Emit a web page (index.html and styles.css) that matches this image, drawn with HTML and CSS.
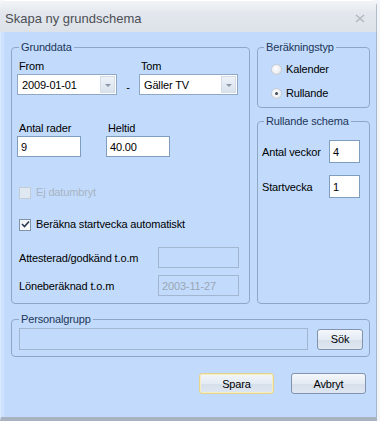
FILE: index.html
```html
<!DOCTYPE html>
<html lang="sv">
  <head>
    <meta charset="UTF-8" />
    <title>Skapa ny grundschema</title>
    <link rel="stylesheet" href="styles.css">
  </head>
  <body>
    <div class="window">
      <div class="titlebar">
        <span class="title">Skapa ny grundschema</span>
        <svg class="close" width="10" height="9" viewBox="0 0 10 9">
          <path d="M1 1 L9 8 M9 1 L1 8" stroke="#b4b9c0" stroke-width="1.6" fill="none" />
        </svg>
      </div>
      <div class="client">
        <div class="top">
          <fieldset class="group grunddata">
            <legend>Grunddata</legend>
            <div class="row dates">
              <div class="field">
                <label>From</label>
                <div class="combo from">
                  <span class="value">2009-01-01</span>
                  <span class="arrow"></span>
                </div>
              </div>
              <span class="dash">-</span>
              <div class="field">
                <label>Tom</label>
                <div class="combo tom">
                  <span class="value">Gäller TV</span>
                  <span class="arrow"></span>
                </div>
              </div>
            </div>
            <div class="row nums">
              <div class="field">
                <label>Antal rader</label>
                <div class="textbox num">9</div>
              </div>
              <div class="field">
                <label>Heltid</label>
                <div class="textbox num">40.00</div>
              </div>
            </div>
            <div class="check disabled">
              <span class="box"></span>Ej datumbryt
            </div>
            <div class="check second">
              <span class="box">
                <svg width="9" height="9" viewBox="0 0 9 9">
                  <path d="M1 4 L3.5 6.5 L8 1.5" stroke="#2a3a50" stroke-width="1.6" fill="none" />
                </svg>
              </span>Beräkna startvecka automatiskt
            </div>
            <div class="pair first">
              <span class="pair-label">Attesterad/godkänd t.o.m</span>
              <div class="textbox readonly"></div>
            </div>
            <div class="pair">
              <span class="pair-label">Löneberäknad t.o.m</span>
              <div class="textbox readonly">2003-11-27</div>
            </div>
          </fieldset>
          <div class="side">
            <fieldset class="group typ">
              <legend>Beräkningstyp</legend>
              <div class="radio">
                <span class="circle"></span>Kalender
              </div>
              <div class="radio second">
                <span class="circle on"></span>Rullande
              </div>
            </fieldset>
            <fieldset class="group schema">
              <legend>Rullande schema</legend>
              <div class="line">
                <span class="line-label">Antal veckor</span>
                <div class="textbox small">4</div>
              </div>
              <div class="line second">
                <span class="line-label">Startvecka</span>
                <div class="textbox small">1</div>
              </div>
            </fieldset>
          </div>
        </div>
        <fieldset class="group personal">
          <legend>Personalgrupp</legend>
          <div class="search">
            <div class="textbox readonly wide"></div>
            <button class="btn sok">Sök</button>
          </div>
        </fieldset>
        <div class="actions">
          <button class="btn default">Spara</button>
          <button class="btn">Avbryt</button>
        </div>
      </div>
    </div>
  </body>
</html>
```

FILE: styles.css
```css
html, body {
  margin: 0;
  padding: 0;
  background: #f4f6f9;
}
body {
  width: 380px;
  height: 421px;
  overflow: hidden;
  font-family: "Liberation Sans", Arial, sans-serif;
  font-size: 11px;
  letter-spacing: -0.15px;
  color: #000;
}
.window {
  width: 377px;
  height: 421px;
  display: flex;
  flex-direction: column;
  border-radius: 6px 6px 0 0;
  overflow: hidden;
}
.titlebar {
  height: 32px;
  flex: none;
  display: flex;
  align-items: center;
  justify-content: space-between;
  padding: 3px 10px 0 5px;
  box-sizing: border-box;
  background: linear-gradient(to bottom, #f2f4f7, #e3e7ed 40%, #dde2e9);
  border-top: 1px solid #fff;
  border-right: 1px solid #b3bdca;
}
.title {
  font-size: 13px;
  color: #4c4f55;
  letter-spacing: 0;
}
.close {
  margin-right: 1px;
}
.client {
  flex: 1;
  background: #c2dbfc;
  padding: 9px 0 0 10px;
  border-left: 1px solid #d8e8fd;
  border-right: 1px solid #a6b7cc;
  border-bottom: 4px solid #a9b3bf;
  box-shadow: inset 3px 0 0 #cfe2fd;
  box-sizing: border-box;
}
.top {
  display: flex;
  height: 263px;
}
.group {
  margin: 0;
  border: 1px solid #8fa7c7;
  border-radius: 4px;
  box-sizing: border-box;
  min-width: 0;
}
.group legend {
  line-height: 13px;
  padding: 0 2px;
  color: #1c3558;
}
.grunddata {
  width: 239px;
  padding: 6px 0 6px 5px;
}
.grunddata legend {
  margin-left: 2px;
}
.row {
  display: flex;
}
.field label {
  display: block;
  line-height: 13px;
  margin: 0 0 1px 2px;
}
.combo {
  display: flex;
  height: 21px;
  background: #fff;
  border: 1px solid #8ea8c6;
  box-sizing: border-box;
  align-items: center;
  padding: 1px;
}
.combo.from {
  width: 100px;
}
.combo.tom {
  width: 99px;
}
.combo .value {
  flex: 1;
  padding-left: 3px;
}
.combo .arrow {
  width: 15px;
  height: 17px;
  background: linear-gradient(to bottom, #eef2f7, #d9e2ed);
  border: 1px solid #d4dce7;
  box-sizing: border-box;
  position: relative;
}
.combo .arrow::after {
  content: "";
  position: absolute;
  left: 4px;
  top: 7px;
  border-left: 3px solid transparent;
  border-right: 3px solid transparent;
  border-top: 3px solid #8c98a8;
}
.dash {
  width: 22px;
  text-align: center;
  padding-top: 21px;
  line-height: 13px;
}
.nums {
  margin-top: 27px;
  gap: 25px;
}
.textbox {
  height: 21px;
  box-sizing: border-box;
  background: #fff;
  border: 1px solid #7f9dbf;
  padding: 3px 0 0 3px;
  line-height: 14px;
}
.textbox.num {
  width: 64px;
}
.check {
  display: flex;
  align-items: center;
  line-height: 13px;
  margin: 29px 0 0 2px;
}
.check.second {
  margin-top: 19px;
}
.check .box {
  width: 12px;
  height: 12px;
  box-sizing: border-box;
  border: 1px solid #8193a9;
  background: linear-gradient(135deg, #eef0f3, #fff);
  margin-right: 5px;
  display: flex;
  align-items: center;
  justify-content: center;
}
.check.disabled {
  color: #a8b4c2;
}
.check.disabled .box {
  border-color: #c3cbd5;
  background: #dfe7f1;
}
.pair {
  display: flex;
  align-items: center;
  margin-top: 7px;
}
.pair.first {
  margin-top: 16px;
}
.pair-label {
  width: 139px;
  padding-left: 2px;
}
.textbox.readonly {
  width: 81px;
  background: transparent;
  border-color: #a3b6d0;
  color: #9aa6b4;
}
.side {
  width: 113px;
  margin-left: 7px;
  display: flex;
  flex-direction: column;
}
.typ {
  padding: 9px 0 7px 13px;
}
.typ legend {
  margin-left: -7px;
}
.radio {
  display: flex;
  align-items: center;
  line-height: 13px;
}
.radio.second {
  margin-top: 11px;
}
.radio .circle {
  width: 11px;
  height: 11px;
  border-radius: 50%;
  box-sizing: border-box;
  border: 1px solid #c6ccd4;
  background: radial-gradient(circle at 40% 40%, #ffffff, #dde1e6);
  margin-right: 4px;
  position: relative;
}
.radio .circle.on::after {
  content: "";
  position: absolute;
  left: 3px;
  top: 3px;
  width: 3px;
  height: 3px;
  border-radius: 50%;
  background: #444c58;
}
.schema {
  flex: 1;
  margin-top: 7px;
  padding: 12px 0 0 4px;
}
.schema legend {
  margin-left: 2px;
}
.line {
  display: flex;
  align-items: center;
}
.line.second {
  margin-top: 12px;
}
.line-label {
  width: 67px;
}
.textbox.small {
  width: 31px;
  height: 23px;
  padding-top: 4px;
}
.personal {
  width: 359px;
  margin-top: 9px;
  padding: 2px 0 6px 7px;
}
.personal legend {
  margin-left: 0;
}
.search {
  display: flex;
  align-items: center;
  gap: 9px;
}
.textbox.wide {
  width: 289px;
  height: 22px;
}
.btn {
  font-family: "Liberation Sans", Arial, sans-serif;
  font-size: 11px;
  letter-spacing: -0.15px;
  height: 21px;
  padding: 0;
  border: 1px solid #8193ad;
  border-radius: 3px;
  background: linear-gradient(to bottom, #f4f7fb, #e4ebf3 50%, #d5dfea 51%, #dfe7f1);
  color: #000;
}
.btn.sok {
  width: 46px;
}
.actions {
  display: flex;
  justify-content: flex-end;
  gap: 17px;
  margin: 16px 10px 0 0;
}
.actions .btn {
  width: 75px;
}
.btn.default {
  border-color: #e5d58a;
  box-shadow: inset 0 0 0 1px #f6edc0;
}
```
